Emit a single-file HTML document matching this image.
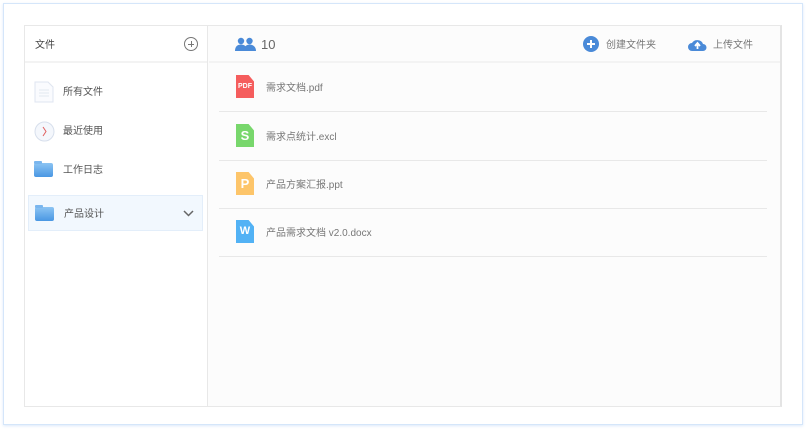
<!DOCTYPE html>
<html><head><meta charset="utf-8"><style>
*{margin:0;padding:0;box-sizing:border-box}
body{width:806px;height:431px;background:#fff;font-family:"Liberation Sans","Noto Sans CJK SC",sans-serif;position:relative;overflow:hidden;color:#666}
.outer{position:absolute;left:3px;top:3px;width:800px;height:422px;border:1px solid #d5e6fa;box-shadow:0 1px 3px #dbe9fb}
.panel{position:absolute;left:24px;top:25px;width:758px;height:382px;border:1px solid #e8e8e8;border-right:2px solid #e4e4e4;background:#fcfcfc}
.side{position:absolute;left:0;top:0;width:183px;height:100%;background:#fff;border-right:1px solid #e8e8e8}
.shead{height:37px;border-bottom:2px solid #f3f3f3;font-size:10px;line-height:1;color:#444;padding:15px 0 0 10px;position:relative}
.plus{position:absolute;right:9px;top:11px;width:14px;height:14px;border:1px solid #777;border-radius:50%}
.plus:before{content:"";position:absolute;left:3px;top:6px;width:6px;height:1px;background:#777}
.plus:after{content:"";position:absolute;left:6px;top:3px;width:1px;height:6px;background:#777}
.it{position:absolute;left:3px;width:175px;height:36px;font-size:10px;line-height:1;color:#555}
.it span{position:absolute;left:35px;top:14px}
.sel{background:#f2f8fe;border:1px solid #e3eefa}
.fold{position:absolute;left:6px;top:11px;width:19px;height:14px;border-radius:2px;background:linear-gradient(#8cc4f3,#4a97e3)}
.fold:before{content:"";position:absolute;left:0;top:-2px;width:8px;height:3px;background:#7ab6ee;border-radius:1px}
.main{position:absolute;left:184px;top:0;right:0;height:100%}
.mhead{height:37px;border-bottom:2px solid #f3f3f3;position:relative;font-size:10px;line-height:1}
.row{position:absolute;left:10px;width:548px;height:49px;border-bottom:1px solid #e8e8e8;font-size:10px;line-height:1;color:#777}
.row span{position:absolute;left:47px;top:21px}
.fi{position:absolute;left:17px;top:12px;width:18px;height:23px;color:#fff;font-weight:bold;font-size:7px;text-align:center;line-height:23px;clip-path:polygon(0 0,70% 0,100% 28%,100% 100%,0 100%)}
</style></head><body>
<div class="outer"></div>
<div class="panel">
 <div class="side">
  <div class="shead">文件<div class="plus"></div></div>
  <div class="it" style="top:48px"><svg style="position:absolute;left:6px;top:7px" width="20" height="22"><path d="M1 1h13l5 5v15H1z" fill="#fafbfe" stroke="#dfe5f0"/><path d="M5 9h10M5 12h10M5 15h10" stroke="#e3e8f0"/></svg><span>所有文件</span></div>
  <div class="it" style="top:87px"><svg style="position:absolute;left:6px;top:8px" width="21" height="21"><circle cx="10.5" cy="10.5" r="9.5" fill="#f4f7fc" stroke="#d7dfec"/><path d="M9 6l3 4.5L9 15" stroke="#e06060" fill="none"/></svg><span>最近使用</span></div>
  <div class="it" style="top:126px"><div class="fold"></div><span>工作日志</span></div>
  <div class="it sel" style="top:169px"><div class="fold"></div><span>产品设计</span><svg style="position:absolute;right:8px;top:14px" width="11" height="7"><path d="M1 1l4.5 4.5L10 1" stroke="#666" stroke-width="1.5" fill="none"/></svg></div>
 </div>
 <div class="main">
  <div class="mhead">
   <svg style="position:absolute;left:26px;top:11px" width="21" height="14"><circle cx="6" cy="4" r="3.2" fill="#4a8ad8"/><circle cx="14.5" cy="4" r="3.2" fill="#4a8ad8"/><path d="M0 14c0-5 3-6.5 6-6.5s6 1.5 6 6.5z" fill="#4a8ad8"/><path d="M9 14c0-5 3-6.5 5.5-6.5S21 9 21 14z" fill="#4a8ad8"/></svg>
   <span style="position:absolute;left:52px;top:12px;font-size:13px;color:#666">10</span>
   <svg style="position:absolute;left:374px;top:10px" width="16" height="16"><circle cx="8" cy="8" r="8" fill="#4a8ad8"/><path d="M8 4v8M4 8h8" stroke="#fff" stroke-width="2"/></svg>
   <span style="position:absolute;left:397px;top:15px;color:#777">创建文件夹</span>
   <svg style="position:absolute;left:479px;top:11px" width="19" height="14"><path d="M4 14a4 4 0 0 1 0-8a6 5.5 0 0 1 11 1a3.5 3.5 0 0 1 0 7z" fill="#4a8ad8"/><path d="M9.5 12V7M7 9l2.5-3 2.5 3" stroke="#fff" stroke-width="1.8" fill="none"/></svg>
   <span style="position:absolute;left:504px;top:15px;color:#777">上传文件</span>
  </div>
  <div class="row" style="top:37px"><div class="fi" style="background:#f55d5d">PDF</div><span>需求文档.pdf</span></div>
  <div class="row" style="top:86px"><div class="fi" style="background:#78d76c;font-size:13px">S</div><span>需求点统计.excl</span></div>
  <div class="row" style="top:134px"><div class="fi" style="background:#fdc56a;font-size:13px">P</div><span>产品方案汇报.ppt</span></div>
  <div class="row" style="top:182px"><div class="fi" style="background:#52b2f5;font-size:11px">W</div><span>产品需求文档 v2.0.docx</span></div>
 </div>
</div>
</body></html>
